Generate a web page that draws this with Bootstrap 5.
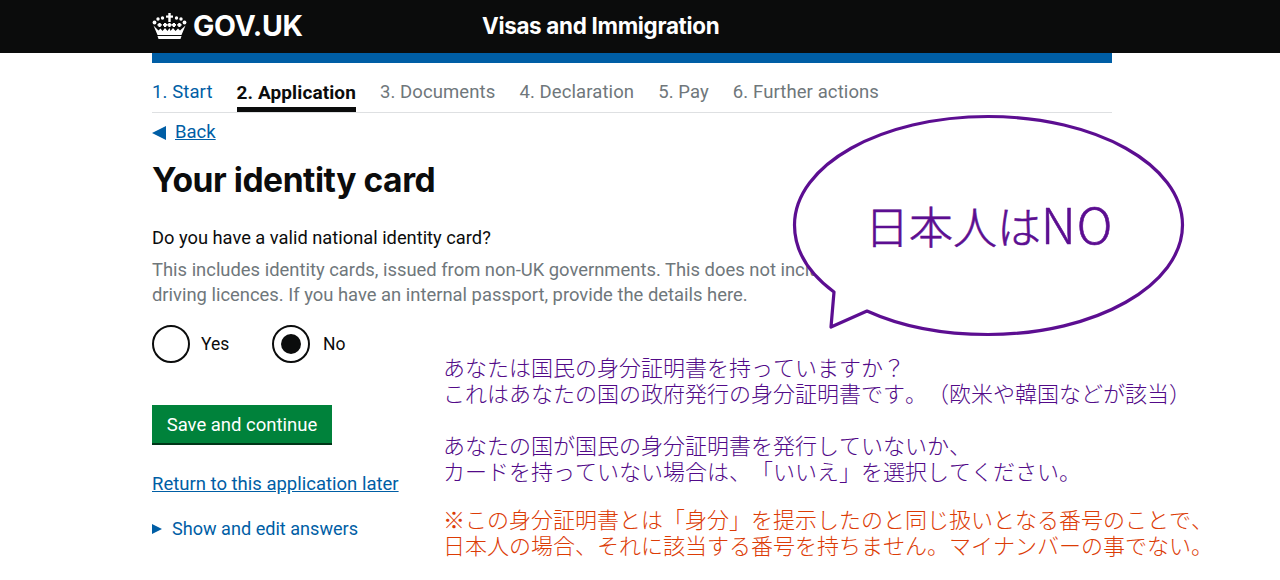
<!DOCTYPE html>
<html lang="en">
<head>
<meta charset="utf-8">
<title>Your identity card</title>
<link href="https://cdn.jsdelivr.net/npm/bootstrap@5.3.0/dist/css/bootstrap.min.css" rel="stylesheet">
<style>
html,body{height:580px;overflow:hidden}
body{font-family:"Roboto","Liberation Sans",sans-serif;color:#0b0c0c;font-size:16px;background:#fff}
.gov-head{background:#0b0c0c;height:53px}
.gov-wrap{width:960px;margin-left:152px}
.gov-logo{color:#fff;font:700 28.5px/52px "Inter","Liberation Sans",sans-serif;width:330px;letter-spacing:-.3px;gap:6px}
.gov-title{color:#fff;font:700 22.4px/52px "Inter","Liberation Sans",sans-serif;letter-spacing:-.3px}
.gov-blue{height:10px;background:#005ea5}
.steps{height:50px;border-bottom:1px solid #dee0e2;gap:24px;font-size:18.5px;letter-spacing:.1px}
.steps span{display:block;padding-top:16px;height:49px;color:#6f777b}
.steps .done{color:#005ea5}
.steps .on{color:#0b0c0c;font-weight:700;font-size:19px;border-bottom:5px solid #0b0c0c;height:49px}
.back-row{height:39px;font-size:18.5px;gap:9px}
.tri-left{width:0;height:0;border:7px solid transparent;border-left-width:0;border-right:14px solid #005ea5}
.gov-link{color:#005ea5;text-decoration:underline}
.page-h{font:700 33.6px/40px "Inter","Liberation Sans",sans-serif;margin:8px 0 25px;letter-spacing:-.45px}
.q{font-size:18.3px;line-height:25px;margin-bottom:7px}
.hint{font-size:18.4px;line-height:25px;color:#6f777b;margin-bottom:18px;white-space:nowrap}
.radio-ring{width:38px;height:38px;border:2px solid #0b0c0c;border-radius:50%;flex:none}
.radio-dot{width:20px;height:20px;background:#0b0c0c;border-radius:50%}
.radio-row{font-size:17.5px}
.radio-one{width:120px;gap:11px}
.radio-one span:last-child{padding-top:1px}
.radio-one+.radio-one{gap:13px}
.gov-btn{background:#00823b;color:#fff;border:0;border-bottom:2px solid #003618;border-radius:0;font-size:18.5px;padding:3px 0 0;width:180px;height:40px;margin-top:42px;display:block}
.ret{font-size:18.5px;line-height:24px;margin-top:27px}
.show-row{font-size:18.1px;line-height:24px;margin-top:21px;gap:10px;color:#005ea5}
.tri-right{width:0;height:0;border:5.5px solid transparent;border-right-width:0;border-left:10px solid #005ea5}
.callout{position:absolute;left:790px;top:112px;width:400px;height:230px}
.callout svg{display:block}
.callout-text{position:absolute;left:75px;top:81px;font:300 44px/60px "Noto Sans CJK JP","Noto Sans",sans-serif;color:#5c0e91;white-space:nowrap;-webkit-text-stroke:.6px #5c0e91}
.callout-text b{font-weight:300;font-size:49px;letter-spacing:1px}
.note{position:absolute;left:443px;top:353px;font:300 22px/26px "Noto Sans CJK JP",sans-serif;color:#520a88;white-space:nowrap;text-spacing-trim:space-all;font-kerning:none}
.note p{margin:0 0 26px}
.note .warn{color:#dc3c06;margin:-4px 0 0}
</style>
</head>
<body>
<header class="gov-head">
  <div class="gov-wrap d-flex">
    <div class="gov-logo d-flex align-items-center">
      <svg width="35" height="26" viewBox="0 0 35 26" fill="#fff" aria-hidden="true">
        <rect x="16.300" y="0" width="2.400" height="9"/><rect x="14" y="2.500" width="7" height="2.200"/>
        <circle cx="2.500" cy="9.500" r="1.900"/><circle cx="32.500" cy="9.500" r="1.900"/>
        <circle cx="6" cy="6" r="1.700"/><circle cx="29" cy="6" r="1.700"/>
        <circle cx="10.500" cy="5" r="1.700"/><circle cx="24.500" cy="5" r="1.700"/>
        <rect x="6.500" y="10" width="2.200" height="4"/><rect x="5.500" y="11" width="4.200" height="1.800"/>
        <rect x="12" y="10" width="2.200" height="4"/><rect x="11" y="11" width="4.200" height="1.800"/>
        <rect x="16.400" y="10" width="2.200" height="4"/><rect x="15.400" y="11" width="4.200" height="1.800"/>
        <rect x="20.800" y="10" width="2.200" height="4"/><rect x="19.800" y="11" width="4.200" height="1.800"/>
        <rect x="26.300" y="10" width="2.200" height="4"/><rect x="25.300" y="11" width="4.200" height="1.800"/>
        <path d="M1.500 12.500 5.500 22h24l4-9.500-5.500 5-2-2-2.500 2.500-2.500-3-2.500 3L17.500 15l-2 3-2.500-3-2.500 3-2-2.500-2 2z"/>
        <path d="M5.500 23h24l-1 3h-22z"/>
      </svg>
      <span>GOV.UK</span>
    </div>
    <div class="gov-title">Visas and Immigration</div>
  </div>
</header>
<main class="gov-wrap">
  <div class="gov-blue"></div>
  <nav class="steps d-flex">
    <span class="done">1. Start</span>
    <span class="on">2. Application</span>
    <span>3. Documents</span>
    <span>4. Declaration</span>
    <span>5. Pay</span>
    <span>6. Further actions</span>
  </nav>
  <div class="back-row d-flex align-items-center">
    <i class="tri-left"></i><a href="#" class="gov-link">Back</a>
  </div>
  <h1 class="page-h">Your identity card</h1>
  <div class="q">Do you have a valid national identity card?</div>
  <div class="hint">This includes identity cards, issued from non-UK governments. This does not include<br>driving licences. If you have an internal passport, provide the details here.</div>
  <div class="radio-row d-flex">
    <div class="radio-one d-flex align-items-center"><span class="radio-ring"></span><span>Yes</span></div>
    <div class="radio-one d-flex align-items-center"><span class="radio-ring d-flex align-items-center justify-content-center"><i class="radio-dot"></i></span><span>No</span></div>
  </div>
  <button class="btn gov-btn" type="button">Save and continue</button>
  <div class="ret"><a href="#" class="gov-link">Return to this application later</a></div>
  <div class="show-row d-flex align-items-center"><i class="tri-right"></i><span>Show and edit answers</span></div>
</main>
<div class="callout">
  <svg width="400" height="230" viewBox="790 112 400 230" aria-hidden="true">
    <path d="M834 292 C807 272 794.500 250 794.500 225 C794.500 165 881 116.500 988 116.500 C1096 116.500 1182.500 165 1182.500 225 C1182.500 285 1096 334.500 988 334.500 C940 334.500 900 326 867 311 L831 327 Z" fill="#fff" stroke="#5c0e91" stroke-width="3.200" stroke-linejoin="round"/>
  </svg>
  <div class="callout-text">日本人は<b>NO</b></div>
</div>
<div class="note">
  <p>あなたは国民の身分証明書を持っていますか？<br>これはあなたの国の政府発行の身分証明書です。（欧米や韓国などが該当）</p>
  <p>あなたの国が国民の身分証明書を発行していないか、<br>カードを持っていない場合は、「いいえ」を選択してください。</p>
  <p class="warn">※この身分証明書とは「身分」を提示したのと同じ扱いとなる番号のことで、<br>日本人の場合、それに該当する番号を持ちません。マイナンバーの事でない。</p>
</div>
<script src="https://cdn.jsdelivr.net/npm/bootstrap@5.3.0/dist/js/bootstrap.bundle.min.js"></script>
</body>
</html>
